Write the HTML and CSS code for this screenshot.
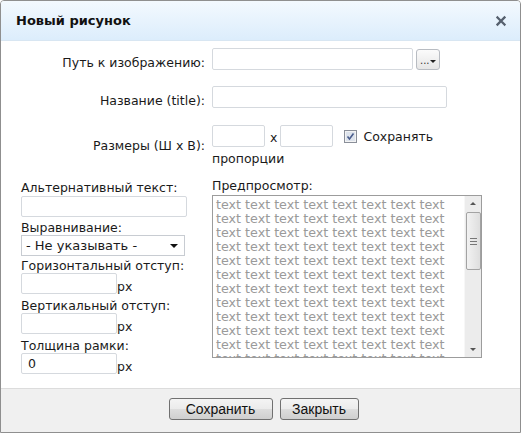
FILE: index.html
```html
<!DOCTYPE html>
<html lang="ru">
<head>
<meta charset="utf-8">
<title>Новый рисунок</title>
<link rel="stylesheet" href="styles.css">
</head>
<body>
<div class="dialog">
  <div class="dlg-header">
    <span class="dlg-title">Новый рисунок</span>
    <svg class="dlg-close" width="12" height="12" viewBox="0 0 12 12"><path d="M2.5 2.5 L9.5 9.5 M9.5 2.5 L2.5 9.5" stroke="#56606e" stroke-width="2.3" stroke-linecap="square"/></svg>
  </div>
  <div class="dlg-body">
    <div class="top-grid">
      <label class="lbl row1">Путь к изображению:</label>
      <div class="field row1">
        <span class="inp inp-path"></span>
        <span class="browse"><span class="dots">...</span><span class="caret"></span></span>
      </div>
      <label class="lbl row2">Название (title):</label>
      <div class="field row2"><span class="inp inp-title"></span></div>
      <label class="lbl row3">Размеры (Ш x В):</label>
      <div class="field-wrap row3">
        <span class="inp inp-size"></span><span class="times">x</span><span class="inp inp-size"></span><span class="chk"><svg width="13" height="13" viewBox="0 0 13 13"><rect x="0.5" y="0.5" width="12" height="12" fill="#f3f3f3" stroke="#8a8f99"/><rect x="2" y="2" width="9" height="9" fill="#dde3ec"/><path d="M3.5 6.5 L5.5 9 L9.5 3.5" fill="none" stroke="#4a5d8c" stroke-width="1.6"/></svg></span><span class="keep">Сохранять пропорции</span>
      </div>
    </div>
    <div class="bottom">
      <div class="leftcol">
        <div class="fl">Альтернативный текст:</div>
        <span class="inp inp-alt"></span>
        <div class="fl fl-a">Выравнивание:</div>
        <div class="select"><span>- Не указывать -</span><span class="sel-arrow"></span></div>
        <div class="fl fl-b">Горизонтальный отступ:</div>
        <div class="pxrow"><span class="inp inp-px"></span><span class="px">px</span></div>
        <div class="fl">Вертикальный отступ:</div>
        <div class="pxrow"><span class="inp inp-px"></span><span class="px">px</span></div>
        <div class="fl">Толщина рамки:</div>
        <div class="pxrow"><span class="inp inp-px">0</span><span class="px">px</span></div>
      </div>
      <div class="rightcol">
        <div class="fl">Предпросмотр:</div>
        <div class="preview">
          <div class="pv-text">
            <div>text text text text text text text text</div>
            <div>text text text text text text text text</div>
            <div>text text text text text text text text</div>
            <div>text text text text text text text text</div>
            <div>text text text text text text text text</div>
            <div>text text text text text text text text</div>
            <div>text text text text text text text text</div>
            <div>text text text text text text text text</div>
            <div>text text text text text text text text</div>
            <div>text text text text text text text text</div>
            <div>text text text text text text text text</div>
            <div>text text text text text text text text</div>
          </div>
          <div class="scrollbar">
            <span class="sb-up"></span>
            <span class="sb-thumb"><span class="grip"></span></span>
            <span class="sb-track"></span>
            <span class="sb-down"></span>
          </div>
        </div>
      </div>
    </div>
  </div>
  <div class="dlg-footer">
    <button class="btn btn-save">Сохранить</button>
    <button class="btn btn-close">Закрыть</button>
  </div>
</div>
</body>
</html>
```

FILE: styles.css
```css
* { box-sizing: border-box; }
html, body { margin: 0; padding: 0; background: #fff; }
body { font-family: "DejaVu Sans", Verdana, sans-serif; font-size: 12.5px; color: #1a1a1a; }

.dialog {
  width: 521px; height: 433px;
  border: 1px solid #8f8f8f;
  border-radius: 4px 4px 0 0;
  display: flex; flex-direction: column;
  overflow: hidden;
}
.dlg-header {
  height: 40px; flex: none;
  background: linear-gradient(#f3f9fe, #dcedfc);
  border-bottom: 1px solid #d8e6f2;
  display: flex; align-items: center; justify-content: space-between;
  padding: 0 13px 0 15px;
}
.dlg-title { font-weight: bold; font-size: 13px; color: #111; }
.dlg-close { display: block; margin-top: 1px; }

.dlg-body { flex: 1; background: #fff; }

.top-grid {
  display: grid;
  grid-template-columns: 204px auto;
  column-gap: 7px;
  padding-top: 7px;
  align-items: start;
}
.lbl { text-align: right; line-height: 15px; }
.lbl.row1 { margin-top: 7px; }
.lbl.row2 { margin-top: 23px; }
.lbl.row3 { margin-top: 30px; }
.field { display: flex; align-items: center; }
.field.row2 { margin-top: 16px; }
.field-wrap.row3 { margin-top: 17px; }

.inp {
  display: inline-block;
  height: 22px;
  border: 1px solid #d5d9de;
  border-radius: 2px;
  background: #fff;
  vertical-align: top;
  padding: 3px 5px;
  line-height: 14px;
}
.inp-path { width: 201px; }
.inp-title { width: 235px; }
.inp-size { width: 53px; height: 22px; }
.browse {
  margin-left: 3px;
  width: 24px; height: 21px;
  border: 1px solid #b8bcc2; border-radius: 3px;
  background: linear-gradient(#fbfbfb, #e6e6e6);
  display: flex; align-items: flex-end; padding: 0 0 4px 3px;
  position: relative;
}
.dots { font-size: 10px; line-height: 8px; color: #333; }
.caret {
  position: absolute; right: 3px; top: 10px;
  border-left: 3px solid transparent; border-right: 3px solid transparent; border-top: 3px solid #222;
}
.field-wrap { width: 230px; line-height: 15px; }
.times { display: inline-block; padding: 5px 3px 0 5px; vertical-align: top; }
.chk { display: inline-block; vertical-align: top; margin: 5px 6px 0 11px; }
.keep { line-height: 16px; position: relative; top: 4px; }

.bottom {
  display: flex;
  padding: 17px 0 0 20px;
}
.leftcol { width: 191px; display: flex; flex-direction: column; align-items: flex-start; }
.fl { line-height: 15px; }
.leftcol .fl { margin-top: 4px; }
.leftcol .fl:first-child { margin-top: 0; }
.leftcol .fl-a { margin-top: 3px; }
.leftcol .fl-b { margin-top: 2px; }
.inp-alt { width: 166px; height: 21px; margin-top: 1px; }
.select {
  width: 164px; height: 21px;
  border: 1px solid #c8ccd2;
  display: flex; align-items: center; justify-content: space-between;
  padding: 0 6px 0 4px;
  font-size: 13px;
}
.sel-arrow {
  border-left: 4px solid transparent; border-right: 4px solid transparent; border-top: 4px solid #111;
}
.pxrow { display: flex; align-items: flex-end; }
.inp-px { width: 96px; height: 21px; padding: 3px 6px; }
.px { line-height: 15px; }

.rightcol { width: 270px; }
.rightcol .fl { margin-top: -2px; }
.preview {
  margin-top: 2px;
  width: 270px; height: 163px;
  border: 1px solid #9c9c9c;
  display: flex; overflow: hidden;
}
.pv-text {
  flex: 1; overflow: hidden;
  color: #9a9a9a; line-height: 14px; font-size: 12.7px;
  padding: 2px 0 0 3px; white-space: nowrap;
}
.scrollbar {
  width: 17px; flex: none;
  background: #ececec;
  display: flex; flex-direction: column; align-items: center;
  border-left: 1px solid #f7f7f7;
}
.sb-up, .sb-down { height: 16px; width: 16px; position: relative; flex: none; }
.sb-up::after {
  content: ""; position: absolute; left: 5px; top: 6px;
  border-left: 3px solid transparent; border-right: 3px solid transparent; border-bottom: 3px solid #555;
}
.sb-down::after {
  content: ""; position: absolute; left: 5px; top: 7px;
  border-left: 3px solid transparent; border-right: 3px solid transparent; border-top: 3px solid #555;
}
.sb-thumb {
  width: 15px; height: 58px; flex: none;
  border: 1px solid #a3a3a3; border-radius: 2px;
  background: linear-gradient(90deg, #f2f2f2, #dedede);
  display: flex; align-items: center; justify-content: center;
}
.grip { width: 7px; height: 7px; border-top: 1px solid #777; border-bottom: 1px solid #777; position: relative; }
.grip::after { content: ""; position: absolute; left: 0; right: 0; top: 2px; border-top: 1px solid #777; }
.sb-track { flex: 1; }

.dlg-footer {
  height: 44px; flex: none;
  background: #f0f0f0;
  border-top: 1px solid #dcdcdc;
  display: flex; justify-content: center; align-items: flex-start;
  gap: 7px;
  padding-top: 9px;
  padding-left: 6px;
}
.btn {
  font-family: "Liberation Sans", Arial, sans-serif;
  font-size: 14px; color: #111;
  height: 22px;
  border: 1px solid #707070; border-radius: 3px;
  background: linear-gradient(#f4f4f4 0%, #ebebeb 50%, #dddddd 51%, #cfcfcf 100%);
  padding: 0;
}
.btn-save { width: 104px; }
.btn-close { width: 79px; }
```
